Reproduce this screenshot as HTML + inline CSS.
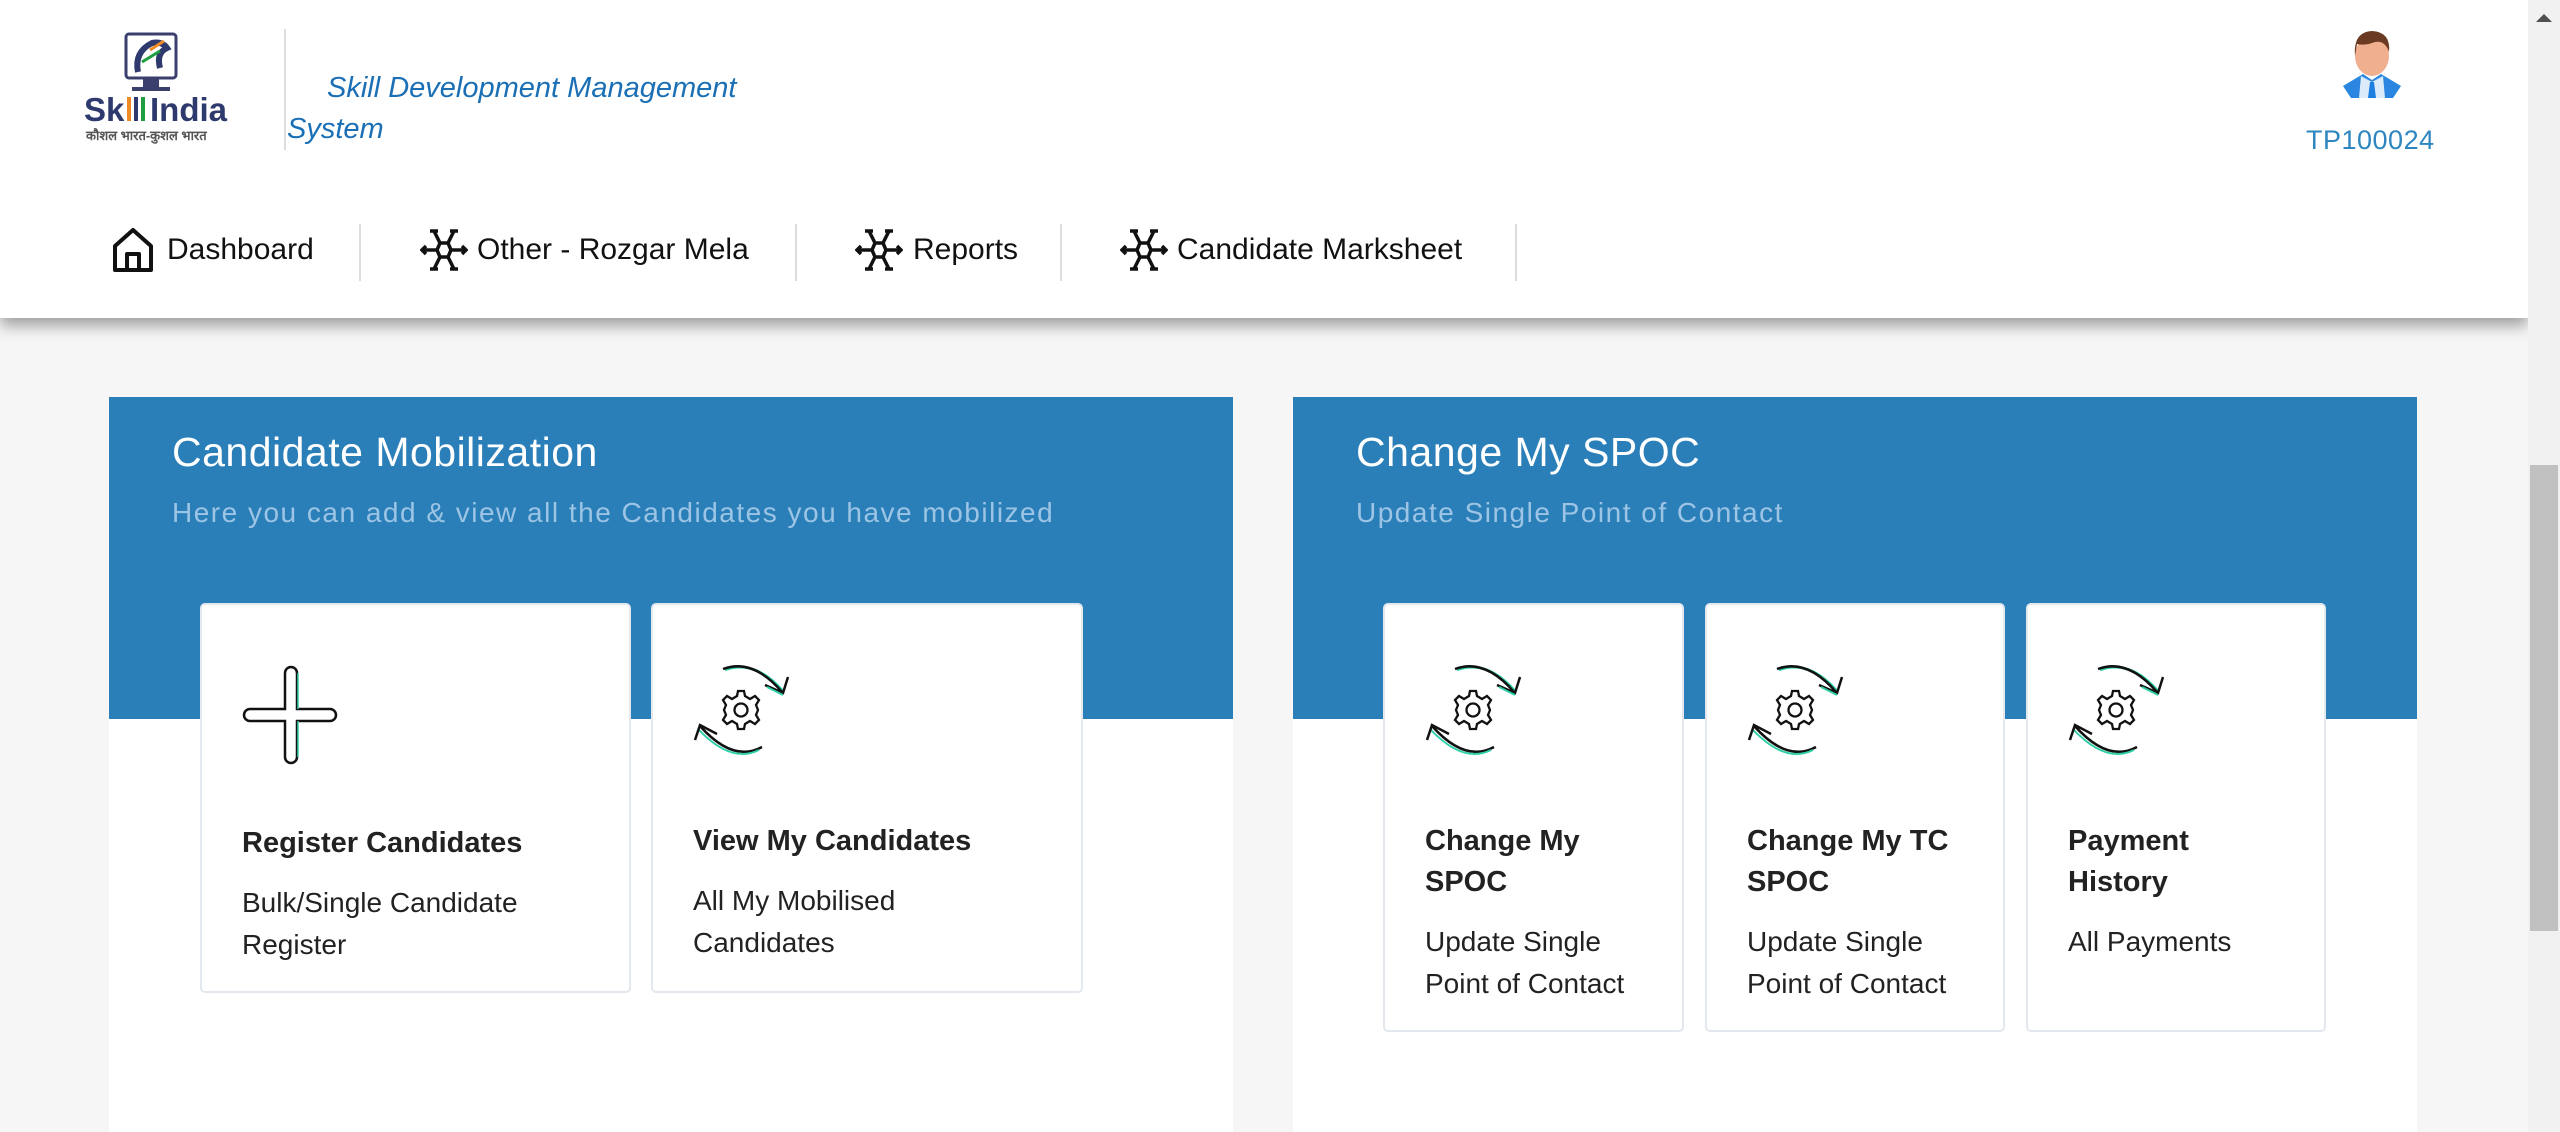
<!DOCTYPE html>
<html><head><meta charset="utf-8"><style>
*{margin:0;padding:0;box-sizing:border-box}
body{width:2560px;height:1132px;overflow:hidden;background:#f6f6f7;font-family:"Liberation Sans",sans-serif;position:relative}
.abs{position:absolute}
.header{position:absolute;left:0;top:0;width:2528px;height:318px;background:#fff;box-shadow:0 8px 14px rgba(0,0,0,0.35)}
.nav{position:absolute;top:233px;font-size:30px;color:#111;white-space:nowrap}
.sep{position:absolute;top:224px;width:2px;height:57px;background:#ddd}
.panel{position:absolute;top:397px;height:735px;background:#fff}
.blue{position:absolute;left:0;top:0;right:0;height:322px;background:#2b7fb9}
.ptitle{position:absolute;left:63px;top:32px;font-size:41px;color:#fff;letter-spacing:0.5px}
.psub{position:absolute;left:63px;top:100px;font-size:28px;color:#9cc4e4;letter-spacing:1.5px}
.card{position:absolute;background:#fff;border:2px solid #e3e8ee;border-radius:5px}
.ct{position:absolute;left:40px;font-size:29px;font-weight:bold;color:#222;line-height:41px}
.cd{position:absolute;left:40px;font-size:28px;color:#222;line-height:42px}
.icon{position:absolute;left:40px;top:60px}
</style></head><body>
<div class="header">
  <svg class="abs" style="left:80px;top:28px" width="150" height="124" viewBox="0 0 150 124">
    <rect x="46" y="6" width="50" height="44" rx="3" fill="#fff" stroke="#3a3f6e" stroke-width="3"/>
    <path d="M58 44 Q54 24 72 15 Q82 13 87 20 Q76 25 80 40" fill="none" stroke="#2e3a6e" stroke-width="6"/>
    <path d="M62 34 L80 23" stroke="#1e9e3e" stroke-width="3"/><path d="M70 22 L84 13" stroke="#f08a24" stroke-width="3"/>
    <rect x="63" y="51" width="16" height="8" fill="#3a3f6e"/><rect x="52" y="59" width="38" height="4" fill="#3a3f6e"/>
    <text x="4" y="93" font-family="Liberation Sans" font-weight="bold" font-size="33" fill="#2e3a6e">Sk</text>
    <rect x="47" y="69" width="4" height="24" fill="#f08a24"/><rect x="54" y="69" width="4" height="24" fill="#2e3a6e"/><rect x="61" y="69" width="4" height="24" fill="#1e9e3e"/>
    <text x="70" y="93" font-family="Liberation Sans" font-weight="bold" font-size="33" fill="#2e3a6e">India</text>
    <text x="6" y="112" font-family="Liberation Sans, Noto Sans CJK SC, sans-serif" font-size="13" font-weight="bold" fill="#555">कौशल भारत-कुशल भारत</text>
  </svg>
  <div class="abs" style="left:284px;top:29px;width:2px;height:121px;background:#ddd"></div>
  <div class="abs" style="left:287px;top:68px;font-size:29px;font-style:italic;color:#1a6fb5;line-height:41px;width:480px;text-indent:40px">Skill Development Management System</div>
  <svg class="abs" style="left:2341px;top:28px" width="62" height="72" viewBox="0 0 62 72">
    <path d="M2 58 L22 46 L31 52 L40 46 L60 58 L52 70 L10 70Z" fill="#2a86e0"/>
    <path d="M20 48 L31 54 L42 48 L44 70 L18 70Z" fill="#dcebfa"/>
    <path d="M29 54 L33 54 L35 70 L27 70Z" fill="#1f7fe0"/>
    <ellipse cx="31" cy="28" rx="17" ry="20" fill="#f0b090"/>
    <path d="M14 28 Q12 4 31 3 Q50 4 48 24 Q44 12 34 14 Q24 18 16 16Z" fill="#6b3a22"/>
  </svg>
  <div class="abs" style="left:2306px;top:125px;font-size:27px;color:#2e86c1;letter-spacing:0.5px">TP100024</div>
  <svg class="abs" style="left:111px;top:226px" width="44" height="48" viewBox="0 0 44 48"><path d="M4 44 V20 L22 4 L40 20 V44 Z M16 44 V28 H28 V44" fill="none" stroke="#111" stroke-width="4" stroke-linejoin="round"/></svg>
  <div class="nav" style="left:167px">Dashboard</div>
  <div class="sep" style="left:359px"></div>
  <svg class="abs" style="left:420px;top:227px" width="48" height="46" viewBox="0 0 48 46"><g fill="none" stroke="#111" stroke-width="3.5"><path d="M14 4 L20 16 L28 16 L34 4 M14 42 L20 30 L28 30 L34 42 M20 16 L17 23 L20 30 M28 16 L31 23 L28 30 M2 23 H17 M31 23 H46"/><path d="M10 4 H18 M30 4 H38 M10 42 H18 M30 42 H38 M6 19 L2 23 L6 27 M42 19 L46 23 L42 27"/></g></svg>
  <div class="nav" style="left:477px">Other - Rozgar Mela</div>
  <div class="sep" style="left:795px"></div>
  <svg class="abs" style="left:855px;top:227px" width="48" height="46" viewBox="0 0 48 46"><g fill="none" stroke="#111" stroke-width="3.5"><path d="M14 4 L20 16 L28 16 L34 4 M14 42 L20 30 L28 30 L34 42 M20 16 L17 23 L20 30 M28 16 L31 23 L28 30 M2 23 H17 M31 23 H46"/><path d="M10 4 H18 M30 4 H38 M10 42 H18 M30 42 H38 M6 19 L2 23 L6 27 M42 19 L46 23 L42 27"/></g></svg>
  <div class="nav" style="left:913px">Reports</div>
  <div class="sep" style="left:1060px"></div>
  <svg class="abs" style="left:1120px;top:227px" width="48" height="46" viewBox="0 0 48 46"><g fill="none" stroke="#111" stroke-width="3.5"><path d="M14 4 L20 16 L28 16 L34 4 M14 42 L20 30 L28 30 L34 42 M20 16 L17 23 L20 30 M28 16 L31 23 L28 30 M2 23 H17 M31 23 H46"/><path d="M10 4 H18 M30 4 H38 M10 42 H18 M30 42 H38 M6 19 L2 23 L6 27 M42 19 L46 23 L42 27"/></g></svg>
  <div class="nav" style="left:1177px">Candidate Marksheet</div>
  <div class="sep" style="left:1515px"></div>
</div>
<div class="abs" style="left:2528px;top:0;width:32px;height:1132px;background:#f1f1f1"></div>
<div class="abs" style="left:2530px;top:465px;width:28px;height:466px;background:#c1c1c1"></div>
<svg class="abs" style="left:2534px;top:12px" width="20" height="12"><path d="M2 10 L10 2 L18 10Z" fill="#505050"/></svg>

<svg width="0" height="0" style="position:absolute"><defs>
<g id="rf">
 <path d="M32 5 Q62 -6 90 26" fill="none" stroke="#2fd0a8" stroke-width="2.5"/>
 <path d="M30 4 Q60 -7 89 27" fill="none" stroke="#111" stroke-width="2.5"/>
 <path d="M72 20 L90 28 L95 12" fill="none" stroke="#111" stroke-width="2.5"/>
 <path d="M74 22 L90 30" fill="none" stroke="#2fd0a8" stroke-width="2"/>
 <path d="M69 82 Q40 98 7 61" fill="none" stroke="#111" stroke-width="2.5"/>
 <path d="M66 85 Q38 99 5 64" fill="none" stroke="#2fd0a8" stroke-width="2"/>
 <path d="M24 69 L7 60 L2 75" fill="none" stroke="#111" stroke-width="2.5"/>
 <g transform="translate(48 45)" fill="none" stroke="#111" stroke-width="2.3">
  <circle r="6.5"/>
  <path d="M-3 -19 H3 L4 -14 L9 -11 L14 -14 L18 -10 L15 -5 L17 0 L15 5 L18 10 L14 14 L9 11 L4 14 L3 19 H-3 L-4 14 L-9 11 L-14 14 L-18 10 L-15 5 L-17 0 L-15 -5 L-18 -10 L-14 -14 L-9 -11 L-4 -14Z"/>
 </g>
</g></defs></svg>

<div class="panel" style="left:109px;width:1124px">
  <div class="blue"></div>
  <div class="ptitle">Candidate Mobilization</div>
  <div class="psub">Here you can add &amp; view all the Candidates you have mobilized</div>
  <div class="card" style="left:91px;top:206px;width:431px;height:390px">
    <svg class="icon" style="left:40px;top:60px" width="100" height="100" viewBox="0 0 100 100"><path d="M43 8 a6 6 0 0 1 12 0 V44 H88 a6 6 0 0 1 0 12 H55 V92 a6 6 0 0 1 -12 0 V56 H8 a6 6 0 0 1 0 -12 H43Z" fill="#fff" stroke="#111" stroke-width="2.5"/><path d="M56 8 V44 M56 56 V92" stroke="#2fd0a8" stroke-width="1.5"/></svg>
    <div class="ct" style="top:218px">Register Candidates</div>
    <div class="cd" style="top:277px">Bulk/Single Candidate<br>Register</div>
  </div>
  <div class="card" style="left:542px;top:206px;width:432px;height:390px">
    <svg class="icon" style="left:40px;top:60px" width="98" height="94" viewBox="0 0 98 94"><use href="#rf"/></svg>
    <div class="ct" style="top:216px">View My Candidates</div>
    <div class="cd" style="top:275px">All My Mobilised<br>Candidates</div>
  </div>
</div>

<div class="panel" style="left:1293px;width:1124px">
  <div class="blue"></div>
  <div class="ptitle">Change My SPOC</div>
  <div class="psub">Update Single Point of Contact</div>
  <div class="card" style="left:90px;top:206px;width:301px;height:429px">
    <svg class="icon" style="left:40px;top:60px" width="98" height="94" viewBox="0 0 98 94"><use href="#rf"/></svg>
    <div class="ct" style="top:216px">Change My<br>SPOC</div>
    <div class="cd" style="top:316px">Update Single<br>Point of Contact</div>
  </div>
  <div class="card" style="left:412px;top:206px;width:300px;height:429px">
    <svg class="icon" style="left:40px;top:60px" width="98" height="94" viewBox="0 0 98 94"><use href="#rf"/></svg>
    <div class="ct" style="top:216px">Change My TC<br>SPOC</div>
    <div class="cd" style="top:316px">Update Single<br>Point of Contact</div>
  </div>
  <div class="card" style="left:733px;top:206px;width:300px;height:429px">
    <svg class="icon" style="left:40px;top:60px" width="98" height="94" viewBox="0 0 98 94"><use href="#rf"/></svg>
    <div class="ct" style="top:216px">Payment<br>History</div>
    <div class="cd" style="top:316px">All Payments</div>
  </div>
</div>
</body></html>
